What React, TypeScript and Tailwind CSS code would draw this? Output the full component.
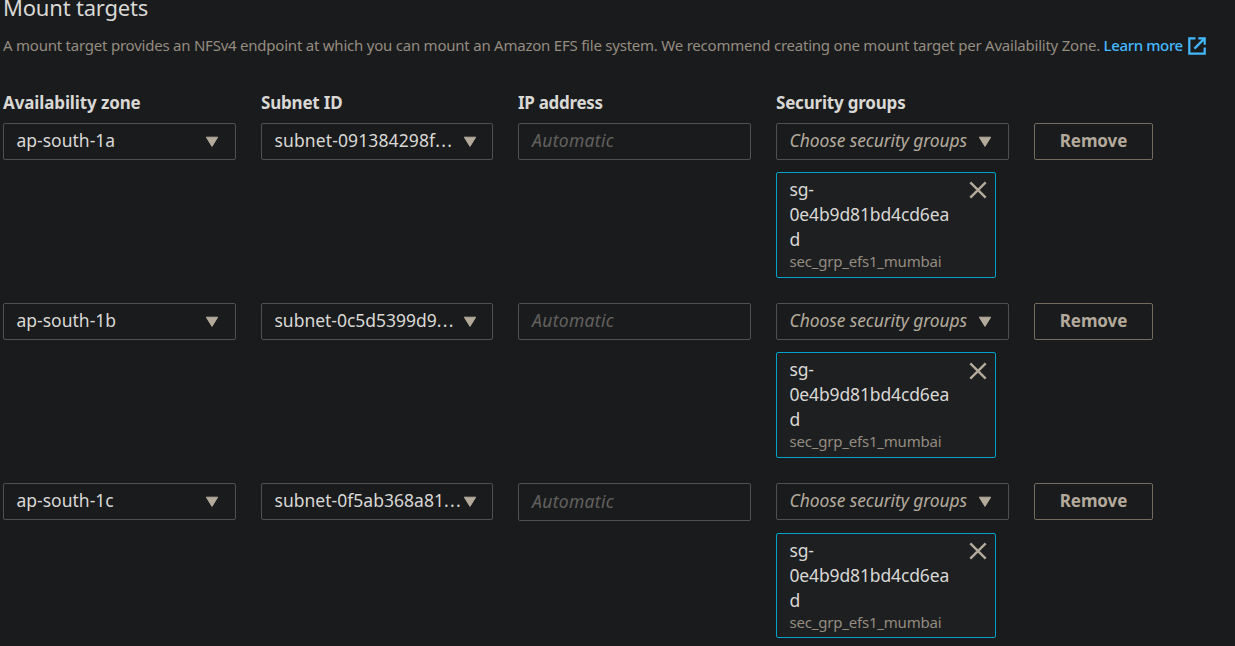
type Target = {
  zone: string;
  subnet: string;
  subnetTracking: string;
  ipHeight: string;
  cardBox: string;
  closeOffset: string;
};

const targets: Target[] = [
  {
    zone: "ap-south-1a",
    subnet: "subnet-091384298f",
    subnetTracking: "tracking-[0.12px]",
    ipHeight: "h-[37px]",
    cardBox: "mt-3 h-[106px]",
    closeOffset: "mt-2",
  },
  {
    zone: "ap-south-1b",
    subnet: "subnet-0c5d5399d9",
    subnetTracking: "tracking-[-0.02px]",
    ipHeight: "h-[37px]",
    cardBox: "mt-3 h-[106px]",
    closeOffset: "mt-[9px]",
  },
  {
    zone: "ap-south-1c",
    subnet: "subnet-0f5ab368a81",
    subnetTracking: "tracking-[0.02px]",
    ipHeight: "h-[38px]",
    cardBox: "mt-[13px] h-[105px]",
    closeOffset: "mt-2",
  },
];

const columns = "grid grid-cols-[233px_232px_233px_233px_119px] gap-x-[25px] items-start";

function Caret() {
  return (
    <svg width="14" height="12" viewBox="0 0 14 12" className="shrink-0 text-[#b3aa9b]">
      <path d="M1.3 1.2h11.4L7 10.4z" fill="currentColor" stroke="currentColor" strokeWidth="1" strokeLinejoin="round" />
    </svg>
  );
}

function ExternalIcon() {
  return (
    <svg width="18" height="18" viewBox="0 0 18 18" fill="none" stroke="#44b9ff" strokeWidth="2.2" className="mt-0.5 shrink-0">
      <path d="M7.5 1.3H1.3v15.4h15.4v-6.2" />
      <path d="M10.3 1.3h6.4v6.4M16.4 1.6L6.4 11.6" />
    </svg>
  );
}

function CloseIcon({ offset }: { offset: string }) {
  return (
    <svg width="18" height="18" viewBox="0 0 18 18" fill="none" stroke="#b3aa9b" strokeWidth="2.4" className={`shrink-0 ${offset}`}>
      <path d="M1.3 1.3l15.4 15.4M16.7 1.3L1.3 16.7" />
    </svg>
  );
}

const box = "flex h-[37px] items-center justify-between rounded-[2px] border border-[#4f5052] pl-[12.5px]";

function Row({ t }: { t: Target }) {
  return (
    <div className={`${columns} h-[180px] text-[17.5px] leading-[25px] text-[#d9d8d5]`}>
      <div className={`${box} pr-4`}>
        <span className="-mt-0.5">{t.zone}</span>
        <Caret />
      </div>
      <div className={`${box} pr-[15px]`}>
        <span className={`-mt-0.5 whitespace-nowrap ${t.subnetTracking}`}>
          {t.subnet}
          <span className="tracking-[1.3px]">...</span>
        </span>
        <Caret />
      </div>
      <div className={`flex items-center rounded-[2px] border border-[#4f5052] pl-[13px] ${t.ipHeight}`}>
        <span className="-mt-0.5 italic tracking-[0.33px] text-[#62615e]">Automatic</span>
      </div>
      <div>
        <div className={`${box} pr-4`}>
          <span className="-mt-0.5 whitespace-nowrap italic tracking-[-0.1px] text-[#b3aa9b]">Choose security groups</span>
          <Caret />
        </div>
        <div className={`flex w-[220px] justify-between rounded-[2px] border border-[#00a1c9] bg-[#1d1f21] pr-2 pl-[12.5px] ${t.cardBox}`}>
          <div className="w-[165px] pt-1">
            <p className="tracking-[-0.14px]">
              sg-
              <br />
              0e4b9d81bd4cd6ea
              <br />
              d
            </p>
            <p className="-mt-px text-[15px] leading-5 tracking-[-0.2px] text-[#958c80]">sec_grp_efs1_mumbai</p>
          </div>
          <CloseIcon offset={t.closeOffset} />
        </div>
      </div>
      <button className="flex h-[37px] items-center justify-center rounded-[2px] border border-[#746b5e] text-[17px] font-bold text-[#b3aa9b]">
        <span className="-mt-0.5 tracking-[-0.1px]">Remove</span>
      </button>
    </div>
  );
}

export default function App() {
  return (
    <main className="flow-root h-[646px] w-[1235px] overflow-hidden bg-[#1a1b1d] pl-[3px] font-['Noto_Sans',sans-serif]">
      <h2 className="h-[14px] text-[22px] leading-[14px] tracking-[-0.2px] text-[#d9d8d5]">Mount targets</h2>
      <p className="mt-[20px] flex h-[22px] items-center text-[15px] leading-[22px] whitespace-nowrap text-[#958c80]">
        <span className="tracking-[-0.227px]">
          A mount target provides an NFSv4 endpoint at which you can mount an Amazon EFS file system. We recommend creating
          one mount target per Availability Zone.
        </span>
        <a className="ml-[3.5px] flex items-center gap-[5.5px] font-medium tracking-[-0.35px] text-[#44b9ff]">
          Learn more
          <ExternalIcon />
        </a>
      </p>
      <div className={`${columns} mt-[34px] mb-[8px] h-[25px] text-[17px] leading-[25px] font-bold text-[#d9d8d5]`}>
        <span className="tracking-[-0.12px]">Availability zone</span>
        <span className="tracking-[-0.2px]">Subnet ID</span>
        <span className="tracking-[-0.3px]">IP address</span>
        <span className="tracking-[-0.2px]">Security groups</span>
      </div>
      {targets.map((t) => (
        <Row key={t.zone} t={t} />
      ))}
    </main>
  );
}
